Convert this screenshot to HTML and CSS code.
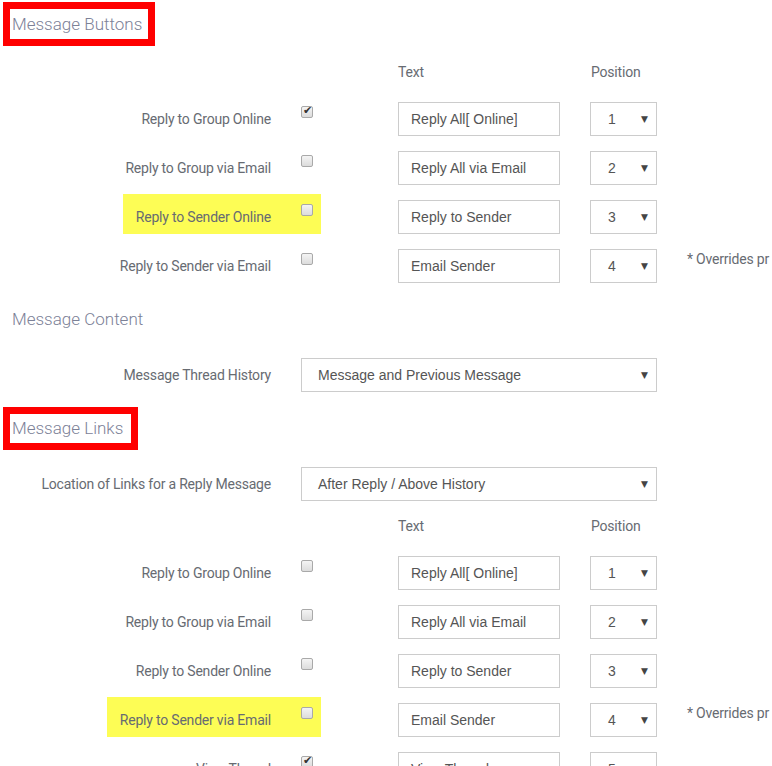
FILE: index.html
```html
<!DOCTYPE html>
<html lang="en">
  <head>
    <meta charset="UTF-8" />
    <meta name="viewport" content="width=device-width, initial-scale=1.0" />
    <title>Message Settings</title>
    <link rel="stylesheet" href="styles.css">
  </head>
  <body>
    <div class="page">
      <!-- Message Buttons -->
      <h2 class="section boxed">Message Buttons</h2>

      <div class="col-head">
        <span class="head-text">Text</span>
        <span class="head-pos">Position</span>
      </div>

      <div class="row">
        <div class="opt"><span class="mark">Reply to Group Online<span class="check on"></span></span></div>
        <div class="field">Reply All[ Online]</div>
        <div class="pick"><span>1</span><span class="arrow">&#9660;</span></div>
      </div>
      <div class="row">
        <div class="opt"><span class="mark">Reply to Group via Email<span class="check"></span></span></div>
        <div class="field">Reply All via Email</div>
        <div class="pick"><span>2</span><span class="arrow">&#9660;</span></div>
      </div>
      <div class="row">
        <div class="opt"><span class="mark hl">Reply to Sender Online<span class="check"></span></span></div>
        <div class="field">Reply to Sender</div>
        <div class="pick"><span>3</span><span class="arrow">&#9660;</span></div>
      </div>
      <div class="row">
        <div class="opt"><span class="mark">Reply to Sender via Email<span class="check"></span></span></div>
        <div class="field">Email Sender</div>
        <div class="pick"><span>4</span><span class="arrow">&#9660;</span></div>
        <div class="note">* Overrides pr</div>
      </div>

      <!-- Message Content -->
      <h2 class="section plain">Message Content</h2>

      <div class="row wide-row">
        <div class="opt"><span class="label">Message Thread History</span></div>
        <div class="pick wide"><span>Message and Previous Message</span><span class="arrow">&#9660;</span></div>
      </div>

      <!-- Message Links -->
      <h2 class="section boxed links">Message Links</h2>

      <div class="row wide-row">
        <div class="opt"><span class="label">Location of Links for a Reply Message</span></div>
        <div class="pick wide"><span>After Reply / Above History</span><span class="arrow">&#9660;</span></div>
      </div>

      <div class="col-head">
        <span class="head-text">Text</span>
        <span class="head-pos">Position</span>
      </div>

      <div class="row">
        <div class="opt"><span class="mark">Reply to Group Online<span class="check"></span></span></div>
        <div class="field">Reply All[ Online]</div>
        <div class="pick"><span>1</span><span class="arrow">&#9660;</span></div>
      </div>
      <div class="row">
        <div class="opt"><span class="mark">Reply to Group via Email<span class="check"></span></span></div>
        <div class="field">Reply All via Email</div>
        <div class="pick"><span>2</span><span class="arrow">&#9660;</span></div>
      </div>
      <div class="row">
        <div class="opt"><span class="mark">Reply to Sender Online<span class="check"></span></span></div>
        <div class="field">Reply to Sender</div>
        <div class="pick"><span>3</span><span class="arrow">&#9660;</span></div>
      </div>
      <div class="row">
        <div class="opt"><span class="mark hl">Reply to Sender via Email<span class="check"></span></span></div>
        <div class="field">Email Sender</div>
        <div class="pick"><span>4</span><span class="arrow">&#9660;</span></div>
        <div class="note">* Overrides pr</div>
      </div>
      <div class="row">
        <div class="opt"><span class="mark">View Thread<span class="check on"></span></span></div>
        <div class="field">View Thread</div>
        <div class="pick"><span>5</span><span class="arrow">&#9660;</span></div>
      </div>
    </div>
  </body>
</html>
```

FILE: styles.css
```css
body {
  margin: 0;
  background: #fff;
  overflow: hidden;
  font-family: "Roboto", "Liberation Sans", sans-serif;
  color: #676b72;
}

.page {
  width: 772px;
  height: 766px;
  overflow: hidden;
  padding-top: 2px;
  box-sizing: border-box;
}

.section {
  font-family: "Roboto", "Liberation Sans", sans-serif;
  font-weight: 300;
  font-size: 17px;
  color: #7c8197;
  line-height: 30px;
  margin: 0;
}

.section.boxed {
  display: inline-block;
  border: 7px solid #ff0000;
  padding: 0 6px 0 2px;
  margin-left: 3px;
}

.section.links {
  margin-top: 15px;
  line-height: 29px;
  padding-right: 8px;
}

.section.plain {
  margin: 21px 0 0 12px;
}

.col-head {
  display: flex;
  height: 20px;
  line-height: 20px;
  font-size: 14px;
  letter-spacing: -0.2px;
  margin: 16px 0 20px;
}

.col-head .head-text {
  margin-left: 398px;
  width: 193px;
}

.row {
  display: flex;
  align-items: center;
  height: 34px;
  margin-bottom: 15px;
  white-space: nowrap;
}

.opt {
  width: 321px;
  flex: none;
  display: flex;
  justify-content: flex-end;
  align-self: stretch;
  align-items: center;
}

.mark {
  display: flex;
  align-items: center;
  font-size: 14px;
  letter-spacing: -0.2px;
  padding: 6px 8px 0 13px;
  height: 40px;
  box-sizing: border-box;
  margin-bottom: 6px;
}

.mark.hl {
  background: #fdfd55;
}

.label {
  font-size: 14px;
  letter-spacing: -0.2px;
  padding-right: 50px;
}

.check {
  width: 12px;
  height: 12px;
  margin-left: 30px;
  margin-top: -14px;
  box-sizing: border-box;
  border: 1px solid #a9a9a9;
  border-radius: 2px;
  background: linear-gradient(#f4f4f4, #dcdcdc);
  position: relative;
  flex: none;
}

.check.on::after {
  content: "\2714";
  position: absolute;
  left: 1px;
  top: -3px;
  font-size: 11px;
  letter-spacing: 0;
  color: #333;
  font-family: "DejaVu Sans", sans-serif;
}

.field {
  flex: none;
  margin-left: 77px;
  width: 162px;
  height: 34px;
  box-sizing: border-box;
  border: 1px solid #cccccc;
  padding-left: 12px;
  line-height: 32px;
  font-family: "Liberation Sans", Arial, sans-serif;
  font-size: 14px;
  color: #555;
}

.pick {
  flex: none;
  margin-left: 30px;
  width: 67px;
  height: 34px;
  box-sizing: border-box;
  border: 1px solid #cccccc;
  padding: 0 8px 0 17px;
  display: flex;
  justify-content: space-between;
  align-items: center;
  font-family: "Liberation Sans", Arial, sans-serif;
  font-size: 14px;
  color: #555;
}

.pick .arrow {
  font-size: 9px;
  color: #444;
  font-family: "DejaVu Sans", sans-serif;
}

.pick.wide {
  margin-left: -20px;
  width: 356px;
  padding-left: 16px;
}

.wide-row {
  margin-top: 24px;
  margin-bottom: 0;
}

.section.links + .wide-row {
  margin-top: 17px;
}

.section.links + .wide-row + .col-head {
  margin-top: 15px;
}

.note {
  flex: none;
  margin-left: 30px;
  align-self: flex-start;
  margin-top: 2px;
  font-size: 14px;
  letter-spacing: -0.2px;
}
```
